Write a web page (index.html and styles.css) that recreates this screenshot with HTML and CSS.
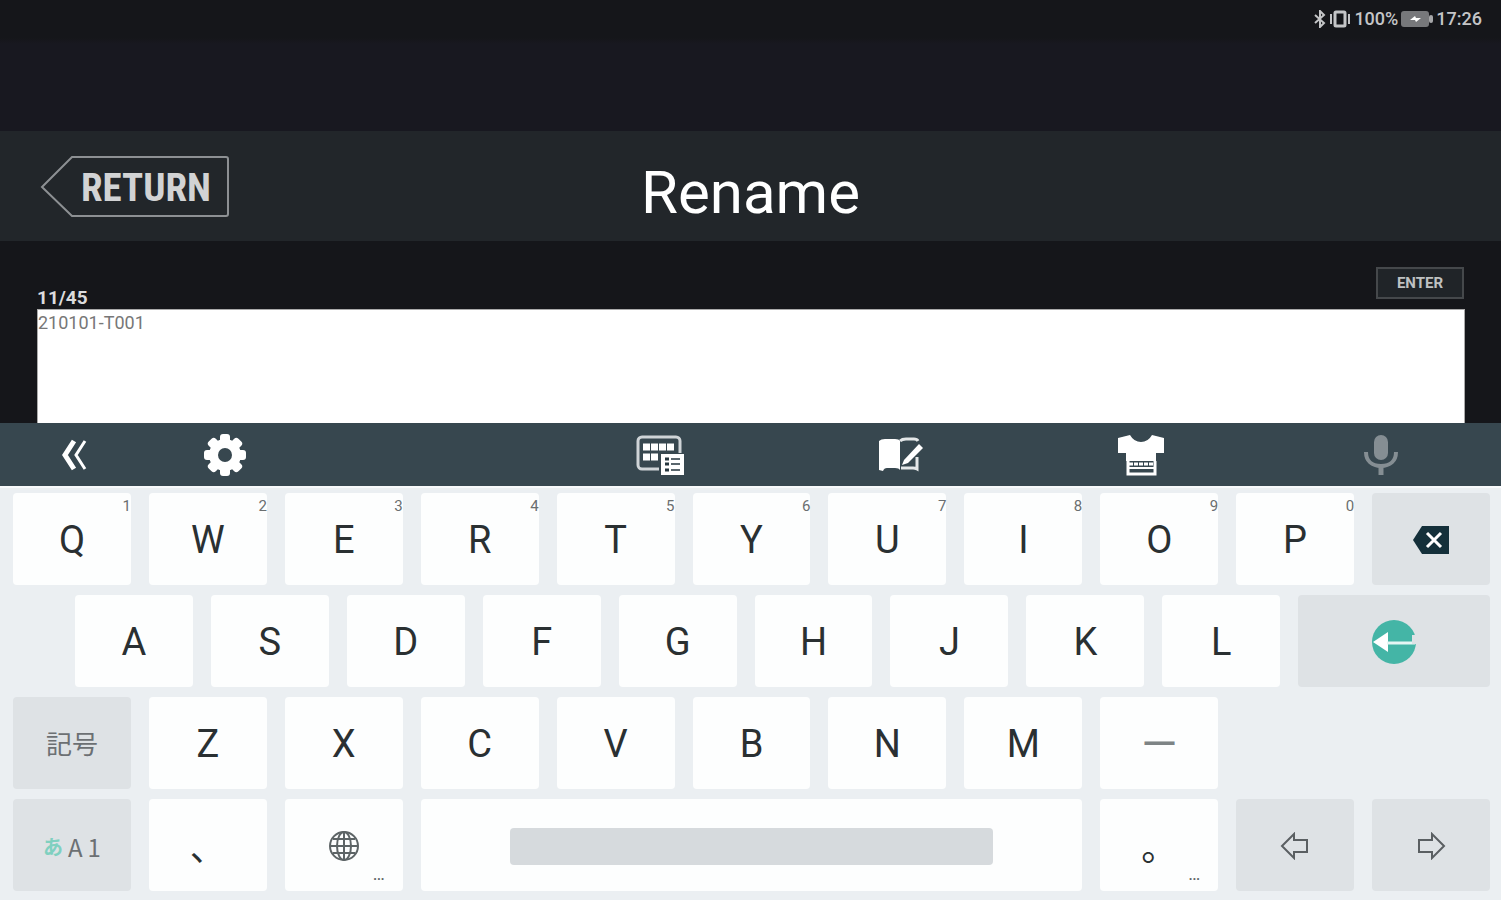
FILE: index.html
```
<!DOCTYPE html>
<html lang="ja">
  <head>
    <meta charset="UTF-8" />
    <title>Rename</title>
    <meta name="viewport" content="width=device-width, initial-scale=1.0" />
    <link rel="stylesheet" href="styles.css">
  </head>
  <body>
    <div class="status-bar">
      <svg width="12" height="18" viewBox="0 0 12 18" fill="none" stroke="currentColor" stroke-width="2">
        <path d="M1 5l9 8-4 4V1l4 4-9 8" />
      </svg>
      <svg width="22" height="18" viewBox="0 0 22 18" fill="none" stroke="currentColor" stroke-width="2">
        <rect x="6" y="2" width="10" height="14" rx="1" stroke-width="3" />
        <path d="M2 4v10M20 4v10" />
      </svg>
      <span>100%</span>
      <svg class="battery" width="32" height="18" viewBox="0 0 32 18">
        <rect x="0" y="1" width="28" height="16" rx="3" fill="#77787b" />
        <rect x="28" y="5" width="4" height="8" rx="2" fill="#a5a6a8" />
        <path d="M9 10l5-4 1 2h5l-5 4-1-2z" fill="#fff" />
      </svg>
      <span>17:26</span>
    </div>

    <header class="header">
      <button class="return-btn" type="button">
        <svg width="190" height="64" viewBox="0 0 190 64" fill="none" stroke="#8d9093" stroke-width="2">
          <path d="M2 32L32 2H186q2 0 2 2V59q0 2-2 2H32z" />
        </svg>
        <span>RETURN</span>
      </button>
      <h1>Rename</h1>
    </header>

    <main class="editor">
      <div class="editor-top">
        <label for="name">11/45</label>
        <button class="enter-btn" type="button">ENTER</button>
      </div>
      <textarea id="name" maxlength="45" spellcheck="false">210101-T001</textarea>
    </main>

    <nav class="toolbar">
      <button type="button" aria-label="閉じる">
        <svg width="28" height="32" viewBox="0 0 28 32" fill="none" stroke="#fff">
          <path d="M13 2L4 16l9 14" stroke-width="5" />
          <path d="M24 2l-9 14 9 14" stroke-width="3" />
        </svg>
      </button>
      <button type="button" aria-label="設定">
        <svg width="44" height="44" viewBox="0 0 44 44">
          <g fill="#fff">
            <rect x="17" y="1" width="10" height="42" rx="3" />
            <rect x="17" y="1" width="10" height="42" rx="3" transform="rotate(45 22 22)" />
            <rect x="17" y="1" width="10" height="42" rx="3" transform="rotate(90 22 22)" />
            <rect x="17" y="1" width="10" height="42" rx="3" transform="rotate(135 22 22)" />
            <circle cx="22" cy="22" r="16" />
          </g>
          <circle cx="22" cy="22" r="7" fill="#37474f" />
        </svg>
      </button>
      <button class="tool-keyboard" type="button" aria-label="キーボード">
        <svg width="50" height="42" viewBox="0 0 50 42">
          <rect x="3" y="3" width="42" height="32" rx="4" fill="none" stroke="#cfd4d7" stroke-width="3" />
          <path d="M8 13h32M8 23h18" stroke="#fff" stroke-width="7" stroke-dasharray="7 1" />
          <rect x="24" y="19" width="26" height="23" fill="#37474f" />
          <rect x="26" y="20" width="23" height="21" fill="#fff" />
          <path d="M30 25h4M30 30h4M30 36h4" stroke="#26363e" stroke-width="3" />
          <path d="M36 25h9M36 30h9M36 36h9" stroke="#59666d" stroke-width="2" />
        </svg>
      </button>
      <button type="button" aria-label="辞書">
        <svg width="46" height="36" viewBox="0 0 46 36">
          <path d="M1 4q2-2 6-2h10q4 0 5 2v29q-1-2-5-2H9q-3 0-4 3l-4-1z" fill="#fff" />
          <path d="M22 4q2-2 6-2h8q3 0 4 2M39 20v12q-2-1-4-1H23" fill="none" stroke="#e4e7e8" stroke-width="3" />
          <path d="M26 23L41 7l4 4-15 15-6 2z" fill="#fff" />
        </svg>
      </button>
      <button type="button" aria-label="きせかえ">
        <svg width="48" height="42" viewBox="0 0 48 42">
          <path d="M13 1L1 4v15h8v8h30v-8h8V4L35 1q-4 7-11 7T13 1z" fill="#fff" />
          <path d="M11 27v13h27V27" fill="none" stroke="#fff" stroke-width="3" />
          <path d="M12 30h25" stroke="#fff" stroke-width="3" stroke-dasharray="4 1" />
          <path d="M12 34h25" stroke="#fff" stroke-width="2" />
        </svg>
      </button>
      <button type="button" aria-label="音声入力">
        <svg width="36" height="42" viewBox="0 0 36 42" fill="none" stroke="#858e93">
          <rect x="11" y="1" width="14" height="25" rx="7" fill="#858e93" stroke="none" />
          <path d="M3 18c0 9 6 14 15 14s15-5 15-14" stroke-width="4" />
          <path d="M18 32v9" stroke-width="5" />
        </svg>
      </button>
    </nav>

    <div class="keyboard">
      <div class="row">
        <button class="key" type="button">Q<span class="sup">1</span></button>
        <button class="key" type="button">W<span class="sup">2</span></button>
        <button class="key" type="button">E<span class="sup">3</span></button>
        <button class="key" type="button">R<span class="sup">4</span></button>
        <button class="key" type="button">T<span class="sup">5</span></button>
        <button class="key" type="button">Y<span class="sup">6</span></button>
        <button class="key" type="button">U<span class="sup">7</span></button>
        <button class="key" type="button">I<span class="sup">8</span></button>
        <button class="key" type="button">O<span class="sup">9</span></button>
        <button class="key" type="button">P<span class="sup">0</span></button>
        <button class="key dark" type="button" aria-label="削除">
          <svg width="38" height="30" viewBox="0 0 38 30">
            <path d="M1 15L10 1h27v28H10z" fill="#14303a" />
            <path d="M15 8l14 14M29 8L15 22" stroke="#fff" stroke-width="3" />
          </svg>
        </button>
      </div>
      <div class="row row-home">
        <button class="key" type="button">A</button>
        <button class="key" type="button">S</button>
        <button class="key" type="button">D</button>
        <button class="key" type="button">F</button>
        <button class="key" type="button">G</button>
        <button class="key" type="button">H</button>
        <button class="key" type="button">J</button>
        <button class="key" type="button">K</button>
        <button class="key" type="button">L</button>
        <button class="key dark wide" type="button" aria-label="確定">
          <svg width="46" height="46" viewBox="0 0 46 46">
            <circle cx="23" cy="23" r="22" fill="#44b5a6" />
            <path d="M2 23l15-10v20z" fill="#fff" />
            <path d="M16 24h28" stroke="#e6f6f4" stroke-width="3" />
            <path d="M43 16v9" stroke="#dee2e5" stroke-width="4" />
          </svg>
        </button>
      </div>
      <div class="row">
        <button class="key dark symbol" type="button">記号</button>
        <button class="key" type="button">Z</button>
        <button class="key" type="button">X</button>
        <button class="key" type="button">C</button>
        <button class="key" type="button">V</button>
        <button class="key" type="button">B</button>
        <button class="key" type="button">N</button>
        <button class="key" type="button">M</button>
        <button class="key dash" type="button">—</button>
      </div>
      <div class="row">
        <button class="key dark mode" type="button"><span class="active">あ</span><span>A</span><span>1</span></button>
        <button class="key punct" type="button">、</button>
        <button class="key" type="button" aria-label="言語">
          <svg width="32" height="32" viewBox="0 0 32 32" fill="none" stroke="#5d6466" stroke-width="2">
            <circle cx="16" cy="16" r="14" />
            <ellipse cx="16" cy="16" rx="7" ry="14" />
            <path d="M16 2v28M2 16h28M5 9h22M5 23h22" />
          </svg>
          <span class="more">…</span>
        </button>
        <button class="key wide" type="button" aria-label="スペース"><span class="space-bar"></span></button>
        <button class="key punct" type="button">。<span class="more">…</span></button>
        <button class="key dark" type="button" aria-label="左">
          <svg width="30" height="28" viewBox="0 0 30 28" fill="none" stroke="#5a5f62" stroke-width="2">
            <path d="M2 14L14 2v6h13v12H14v6z" />
          </svg>
        </button>
        <button class="key dark" type="button" aria-label="右">
          <svg width="30" height="28" viewBox="0 0 30 28" fill="none" stroke="#5a5f62" stroke-width="2">
            <path d="M28 14L16 2v6H3v12h13v6z" />
          </svg>
        </button>
      </div>
    </div>
  </body>
</html>
```
FILE: styles.css
```
* {
  box-sizing: border-box;
}
body {
  margin: 0;
  min-height: 100vh;
  display: flex;
  flex-direction: column;
  font-family: Roboto, 'Noto Sans CJK JP', sans-serif;
  background-color: #15161a;
  color: #fff;
}
button {
  padding: 0;
  border: none;
  background: none;
  color: inherit;
  font-family: inherit;
}
svg {
  display: block;
}
.status-bar {
  display: flex;
  justify-content: flex-end;
  align-items: center;
  gap: 3px;
  height: 131px;
  padding: 0 19px 94px 0;
  font-size: 18px;
  font-weight: 500;
  color: #c4c5c7;
  background: linear-gradient(#15161a 38px, #181820 44px);
}

.header {
  display: grid;
  grid-template-columns: 1fr auto 1fr;
  align-items: center;
  height: 110px;
  padding: 2px 40px 0;
  background-color: #22262a;
}
.return-btn {
  position: relative;
  width: 190px;
  height: 64px;
}
.return-btn span {
  position: absolute;
  inset: 0 0 0 22px;
  font-family: 'Roboto Condensed', 'Liberation Sans Narrow', Roboto, sans-serif;
  font-size: 39px;
  font-weight: bold;
  line-height: 66px;
  color: #d2d3d4;
}
h1 {
  margin: 0;
  padding-top: 12px;
  font-size: 60px;
  font-weight: normal;
  line-height: 72px;
}

.editor {
  flex: 1;
  display: flex;
  flex-direction: column;
  padding: 26px 36px 0 37px;
}
.editor-top {
  display: flex;
  justify-content: space-between;
  height: 42px;
}
.editor-top label {
  align-self: flex-end;
  font-size: 19px;
  font-weight: bold;
  line-height: 22px;
  color: #dcdcdd;
}
.enter-btn {
  width: 88px;
  height: 32px;
  margin-right: 1px;
  border: 2px solid #45484b;
  background-color: #202428;
  font-size: 15px;
  font-weight: bold;
  color: #bfc1c2;
}
textarea {
  flex: 1;
  min-height: 112px;
  padding: 3px 0;
  border: 1px solid #aaa;
  border-bottom: none;
  border-radius: 0;
  outline: none;
  resize: none;
  font-family: inherit;
  font-size: 18px;
  line-height: 20px;
  background-color: #fff;
  color: #777;
}

.toolbar {
  display: grid;
  grid-template-columns: 10% 10% repeat(5, 16%);
  height: 65px;
  border-bottom: 2px solid #f8fafb;
  background-color: #37474f;
}
.toolbar button {
  display: flex;
  justify-content: center;
  align-items: center;
}
.tool-keyboard {
  grid-column: 4;
}

.keyboard {
  display: flex;
  flex-direction: column;
  gap: 10px;
  padding: 5px 11px 9px 13px;
  background-color: #ebeff2;
}
.row {
  display: flex;
  gap: 18px;
}
.row-home::before {
  content: '';
  flex: 0 0 44px;
}
.key {
  position: relative;
  display: flex;
  justify-content: center;
  align-items: center;
  flex: 0 0 calc((100% - 180px) / 11);
  height: 92px;
  padding-top: 2px;
  border-radius: 4px;
  background-color: #fdfefe;
  font-size: 38px;
  color: #2a3032;
}
.key.dark {
  background-color: #dee2e5;
}
.key.wide {
  flex: 1;
}
.key.symbol {
  padding-bottom: 4px;
  font-size: 26px;
  color: #6c7073;
}
.key.mode {
  gap: 5px;
  font-family: 'Noto Sans CJK JP', sans-serif;
  font-size: 24px;
  color: #6c7073;
}
.key.dash {
  font-size: 46px;
  color: #7e8485;
}
.key.punct {
  padding-bottom: 2px;
  font-size: 36px;
}
.active {
  font-size: 20px;
  font-weight: bold;
  color: #7fd0c0;
}
.sup {
  position: absolute;
  top: 4px;
  right: 0;
  font-size: 15px;
  line-height: 18px;
  color: #6a6e70;
}
.more {
  position: absolute;
  right: 18px;
  bottom: 8px;
  font-size: 18px;
  line-height: 18px;
  color: #5d6466;
}
.space-bar {
  width: 73%;
  height: 37px;
  border-radius: 4px;
  background-color: #d6dadd;
}
```
